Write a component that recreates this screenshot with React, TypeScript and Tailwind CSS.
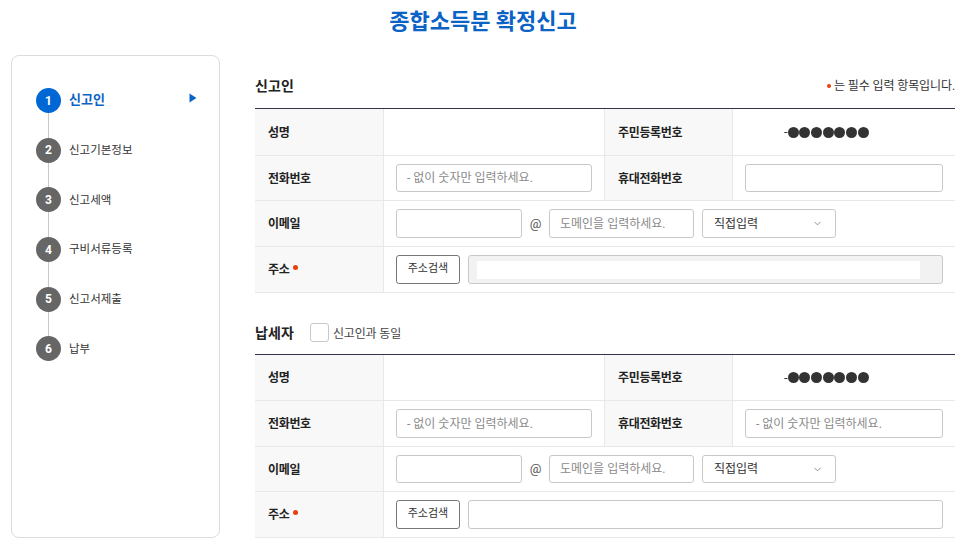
import { ChevronDown } from "lucide-react";

const steps = ["신고인", "신고기본정보", "신고세액", "구비서류등록", "신고서제출", "납부"];

const thCls =
    "flex items-center bg-[#f8f8f8] pl-[13px] pt-[1px] text-[12px] tracking-[-0.35px] font-bold text-[#222] border-r border-[#e8e8e8]";
const inputCls =
    "rounded-[3px] border border-[#c8c8c8] bg-white px-[10px] text-[12px] text-[#333] placeholder:text-[#8a8a8a] outline-none";

const Th = ({ label, required }: { label: string; required?: boolean }) => (
    <div className={thCls}>
        {label}
        {required ? <span className="ml-[4px] mb-[6px] size-[5px] rounded-full bg-[#e8400c]" /> : null}
    </div>
);

const Row = ({ h, children }: { h: string; children: React.ReactNode }) => (
    <div className={`grid grid-cols-[129px_221px_128px_222px] border-b border-[#e8e8e8] ${h}`}>{children}</div>
);

const Masked = () => (
    <div className="flex items-center pl-[51px] text-[13px] text-[#333]">
        -
        <span className="flex gap-[0.7px]">
            {[0, 1, 2, 3, 4, 5, 6].map((i) => (
                <span key={i} className="size-[11px] rounded-full bg-[#333]" />
            ))}
        </span>
    </div>
);

const Select = ({ h }: { h: string }) => (
    <div className={`ml-[8px] flex w-[134px] items-center justify-between rounded-[3px] border border-[#c8c8c8] bg-white pl-[11px] pr-[12px] text-[12px] text-[#333] ${h}`}>
        직접입력
        <ChevronDown size={11} className="text-[#888]" />
    </div>
);

const Section = ({
    heights,
    phoneH,
    emailH,
    mobilePlaceholder,
    disabledAddress,
}: {
    heights: string[];
    phoneH: string;
    emailH: string;
    mobilePlaceholder?: string;
    disabledAddress?: boolean;
}) => (
    <div className="border-t border-[#33324a]">
        <Row h={heights[0]}>
            <Th label="성명" />
            <div className="border-r border-[#e8e8e8]" />
            <Th label="주민등록번호" />
            <Masked />
        </Row>
        <Row h={heights[1]}>
            <Th label="전화번호" />
            <div className="flex items-center border-r border-[#e8e8e8] pl-[12px]">
                <input className={`${inputCls} ${phoneH} w-[196px]`} placeholder="- 없이 숫자만 입력하세요." readOnly />
            </div>
            <Th label="휴대전화번호" />
            <div className="flex items-center pl-[12px]">
                <input
                    className={`${inputCls} ${phoneH} w-[198px]`}
                    placeholder={mobilePlaceholder}
                    readOnly
                />
            </div>
        </Row>
        <div className={`flex border-b border-[#e8e8e8] ${heights[2]}`}>
            <div className="w-[129px] shrink-0 grid">
                <Th label="이메일" />
            </div>
            <div className="flex items-center pl-[12px]">
                <input className={`${inputCls} ${emailH} w-[126px]`} readOnly />
                <span className="w-[27px] text-center text-[13px] text-[#555]">@</span>
                <input className={`${inputCls} ${emailH} w-[145px]`} placeholder="도메인을 입력하세요." readOnly />
                <Select h={emailH} />
            </div>
        </div>
        <div className={`flex border-b border-[#e8e8e8] ${heights[3]}`}>
            <div className="w-[129px] shrink-0 grid">
                <Th label="주소" required />
            </div>
            <div className="flex items-center pl-[12px]">
                <button className="h-[29px] w-[64px] rounded-[3px] border border-[#777] bg-white text-[11px] text-[#333]">
                    주소검색
                </button>
                {disabledAddress ? (
                    <div className="ml-[8px] flex h-[29px] w-[475px] items-center rounded-[3px] border border-[#c8c8c8] bg-[#f2f2f2] pl-[8px]">
                        <div className="h-[18px] w-[443px] bg-white" />
                    </div>
                ) : (
                    <div className="ml-[8px] h-[29px] w-[475px] rounded-[3px] border border-[#c8c8c8] bg-white" />
                )}
            </div>
        </div>
    </div>
);

export default function App() {
    return (
        <div className="h-[547px] w-[969px] overflow-hidden bg-white font-['Roboto','Noto_Sans_CJK_KR',sans-serif] text-[#333]">
            <h1 className="pt-[7px] pb-[1px] pr-[3px] text-center text-[22px] leading-[29px] font-bold text-[#0b63c5]">
                종합소득분 확정신고
            </h1>
            <div className="mt-[18px] flex pl-[11px]">
                <nav className="relative h-[483px] w-[209px] shrink-0 rounded-[8px] border border-[#dcdcdc] pl-[24px] pt-[32px]">
                    <div className="absolute left-[36px] top-[50px] h-[245px] w-[1px] bg-[#c9c9c9]" />
                    <ul className="relative flex flex-col gap-[24.7px]">
                        {steps.map((s, i) => (
                            <li key={s} className="flex h-[25px] items-center">
                                <span
                                    className={`flex size-[25px] items-center justify-center rounded-full text-[12px] font-bold text-white ${
                                        i === 0 ? "bg-[#0067d5]" : "bg-[#666]"
                                    }`}
                                >
                                    {i + 1}
                                </span>
                                <span
                                    className={`ml-[8px] ${
                                        i === 0
                                            ? "pb-[1px] text-[13px] font-bold text-[#0b63c5]"
                                            : "pt-[1px] text-[11.5px] text-[#333]"
                                    }`}
                                >
                                    {s}
                                </span>
                                {i === 0 ? (
                                    <svg width="8" height="10" viewBox="0 0 8 10" className="absolute left-[153px] top-[5px]">
                                        <path d="M0.5 0.5 L7.5 5 L0.5 9.5 Z" fill="#0b63c5" />
                                    </svg>
                                ) : null}
                            </li>
                        ))}
                    </ul>
                </nav>
                <main className="ml-[35px] w-[700px]">
                    <div className="flex h-[53px] items-start justify-between pt-[20px]">
                        <h2 className="text-[14px] tracking-[0.1px] leading-[22px] font-bold text-[#222]">신고인</h2>
                        <p className="flex items-center text-[12px] tracking-[-0.1px] leading-[22px] text-[#333]">
                            <span className="mr-[3px] size-[4px] rounded-full bg-[#e8400c]" />는 필수 입력 항목입니다.
                        </p>
                    </div>
                    <Section
                        disabledAddress
                        phoneH="h-[28px]"
                        emailH="h-[29px]"
                        heights={["h-[47px]", "h-[45px]", "h-[46px]", "h-[46px]"]}
                    />
                    <div className="mt-[29px] flex h-[32px] items-start">
                        <h2 className="text-[14px] tracking-[0.1px] leading-[22px] font-bold text-[#222]">납세자</h2>
                        <span className="ml-[16px] mt-[1px] size-[19px] rounded-[3px] border border-[#c8c8c8] bg-white" />
                        <span className="ml-[4px] mt-[2px] text-[12px] tracking-[-0.15px] leading-[20px] text-[#444]">신고인과 동일</span>
                    </div>
                    <Section
                        mobilePlaceholder="- 없이 숫자만 입력하세요."
                        phoneH="h-[29px]"
                        emailH="h-[28px]"
                        heights={["h-[46px]", "h-[46px]", "h-[45px]", "h-[46px]"]}
                    />
                </main>
            </div>
        </div>
    );
}
